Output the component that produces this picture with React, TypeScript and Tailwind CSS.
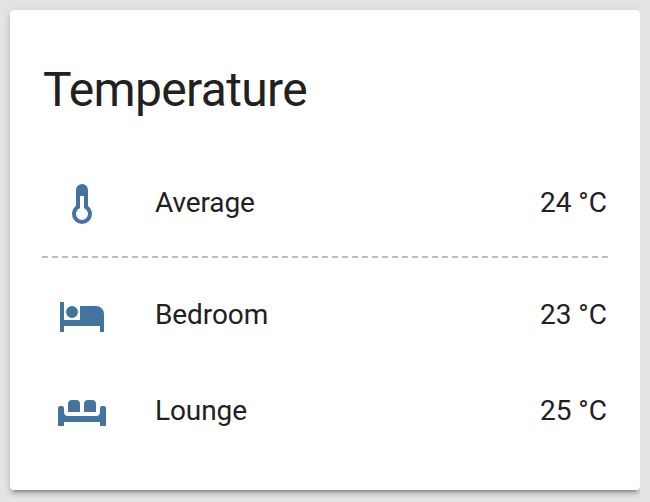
import React from "react";

type RowProps = { name: string; value: string; children: React.ReactNode; className: string };

function Row({ name, value, children, className }: RowProps) {
  return (
    <div className={`flex h-20 items-center ${className}`}>
      <div className="flex w-20 shrink-0 justify-center text-[#44739e]">
        <svg viewBox="0 0 24 24" className="size-12" fill="currentColor">{children}</svg>
      </div>
      <span className="ml-[33px] flex-1 pb-0.5 tracking-[-0.1px]">{name}</span>
      <span className="pr-px pb-0.5">{value}</span>
    </div>
  );
}

export default function App() {
  return (
    <main className="flex h-[502px] w-[650px] overflow-hidden bg-[#e4e4e4] font-['Roboto',sans-serif] text-[#212121]">
      <div className="flex w-[640px] flex-col overflow-hidden pt-2.5 pb-3 pl-2.5">
        <section className="flex-1 rounded-[4px] bg-white px-8 shadow-[0_4px_4px_rgba(0,0,0,0.14),0_2px_10px_rgba(0,0,0,0.12),0_6px_2px_-4px_rgba(0,0,0,0.2)]">
          <h1 className="pt-12 pl-px text-[48px] leading-[64px] tracking-[-0.65px]">Temperature</h1>
          <div className="mt-[42px] text-[28px] leading-10">
            <Row name="Average" value="24 °C" className="">
              <path d="M17 17A5 5 0 0 1 7 17C7 15.36 7.79 13.91 9 13V5A3 3 0 0 1 15 5V13C16.21 13.91 17 15.36 17 17M11 8V14.17C9.83 14.58 9 15.69 9 17A3 3 0 0 0 15 17C15 15.69 14.17 14.58 13 14.17V8H11Z" />
            </Row>
            <svg className="mt-3 block h-0.5 w-full" viewBox="0 0 566 2">
              <path d="M0 1H566" stroke="#bdbdbd" strokeWidth="2" strokeDasharray="6 4" />
            </svg>
            <Row name="Bedroom" value="23 °C" className="mt-[18px]">
              <path d="M19 7H11V14H3V5H1V20H3V17H21V20H23V11A4 4 0 0 0 19 7M7 13A3 3 0 0 0 10 10A3 3 0 0 0 7 7A3 3 0 0 0 4 10A3 3 0 0 0 7 13Z" />
            </Row>
            <Row name="Lounge" value="25 °C" className="mt-4">
              <path d="M7 6H9A2 2 0 0 1 11 8V12H5V8A2 2 0 0 1 7 6M15 6H17A2 2 0 0 1 19 8V12H13V8A2 2 0 0 1 15 6M1 9H2A1 1 0 0 1 3 10V12A2 2 0 0 0 5 14H19A2 2 0 0 0 21 12V10A1 1 0 0 1 22 9H23A1 1 0 0 1 24 10V19H21V17H3V19H0V10A1 1 0 0 1 1 9Z" />
            </Row>
          </div>
        </section>
      </div>
    </main>
  );
}
